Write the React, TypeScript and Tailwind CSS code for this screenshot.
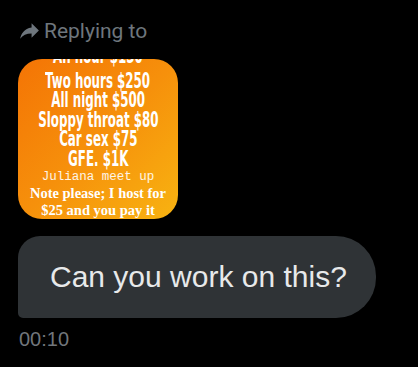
import React from "react";

const priceLines = ["Two hours $250", "All night $500", "Sloppy throat $80", "Car sex $75", "GFE. $1K"];

function ReplyIcon() {
  return (
    <svg viewBox="0 0 24 24" className="h-[25px] w-[25px]" fill="#6e767d" aria-hidden="true">
      <path d="M14 9V5l7 7-7 7v-4.1c-5 0-8.5 1.6-11 5.1 1-5 4-10 11-11z" />
    </svg>
  );
}

export default function App() {
  return (
    <div
      className="h-[367px] w-full overflow-hidden bg-black"
      style={{ fontFamily: "Roboto, 'Liberation Sans', sans-serif" }}
    >
      {/* Replying to */}
      <div className="flex items-center gap-[2px] pl-[17px] pt-[18px]">
        <ReplyIcon />
        <span className="text-[21px] leading-[24px] text-[#6e767d]">Replying to</span>
      </div>

      {/* Attached image */}
      <div className="ml-[18px] mt-[16px] h-[160px] w-[160px] overflow-hidden rounded-[24px] bg-[linear-gradient(135deg,#f47405_0%,#f6900b_50%,#f8b311_100%)]">
        <div className="-mt-[13px] flex flex-col items-center text-white">
          <div className="flex flex-col items-center font-bold" style={{ fontFamily: "'Liberation Sans Narrow', 'DejaVu Sans Condensed', sans-serif" }}>
            <span className="mb-[5px] scale-x-[0.6] whitespace-nowrap text-[22px] leading-[19.5px]">An hour $150</span>
            {priceLines.map((l) => (
              <span key={l} className="scale-x-[0.6] whitespace-nowrap text-[22px] leading-[19.5px]">
                {l}
              </span>
            ))}
          </div>
          <span
            className="mt-[1px] whitespace-nowrap text-[12.5px] leading-[16px] text-white/90"
            style={{ fontFamily: "'Liberation Mono', monospace" }}
          >
            Juliana meet up
          </span>
          <span
            className="whitespace-nowrap text-[14.5px] font-bold leading-[17px]"
            style={{ fontFamily: "'Liberation Serif', serif" }}
          >
            Note please; I host for
          </span>
          <span
            className="whitespace-nowrap text-[14.5px] font-bold leading-[17px]"
            style={{ fontFamily: "'Liberation Serif', serif" }}
          >
            $25 and you pay it
          </span>
        </div>
      </div>

      {/* Message bubble */}
      <div className="ml-[18px] mt-[17px] flex h-[82px] w-[358px] items-center rounded-[40px] rounded-tl-[22px] rounded-bl-[5px] bg-[#2f3336] pl-[32px]">
        <span
          className="text-[30px] leading-[32px] text-[#e7e9ea]"
          style={{ fontFamily: "'Liberation Sans', Arial, sans-serif" }}
        >
          Can you work on this?
        </span>
      </div>

      <div
        className="ml-[19px] mt-[10px] text-[20px] leading-[22px] text-[#71767b]"
        style={{ fontFamily: "'Liberation Sans', Arial, sans-serif" }}
      >
        00:10
      </div>
    </div>
  );
}
